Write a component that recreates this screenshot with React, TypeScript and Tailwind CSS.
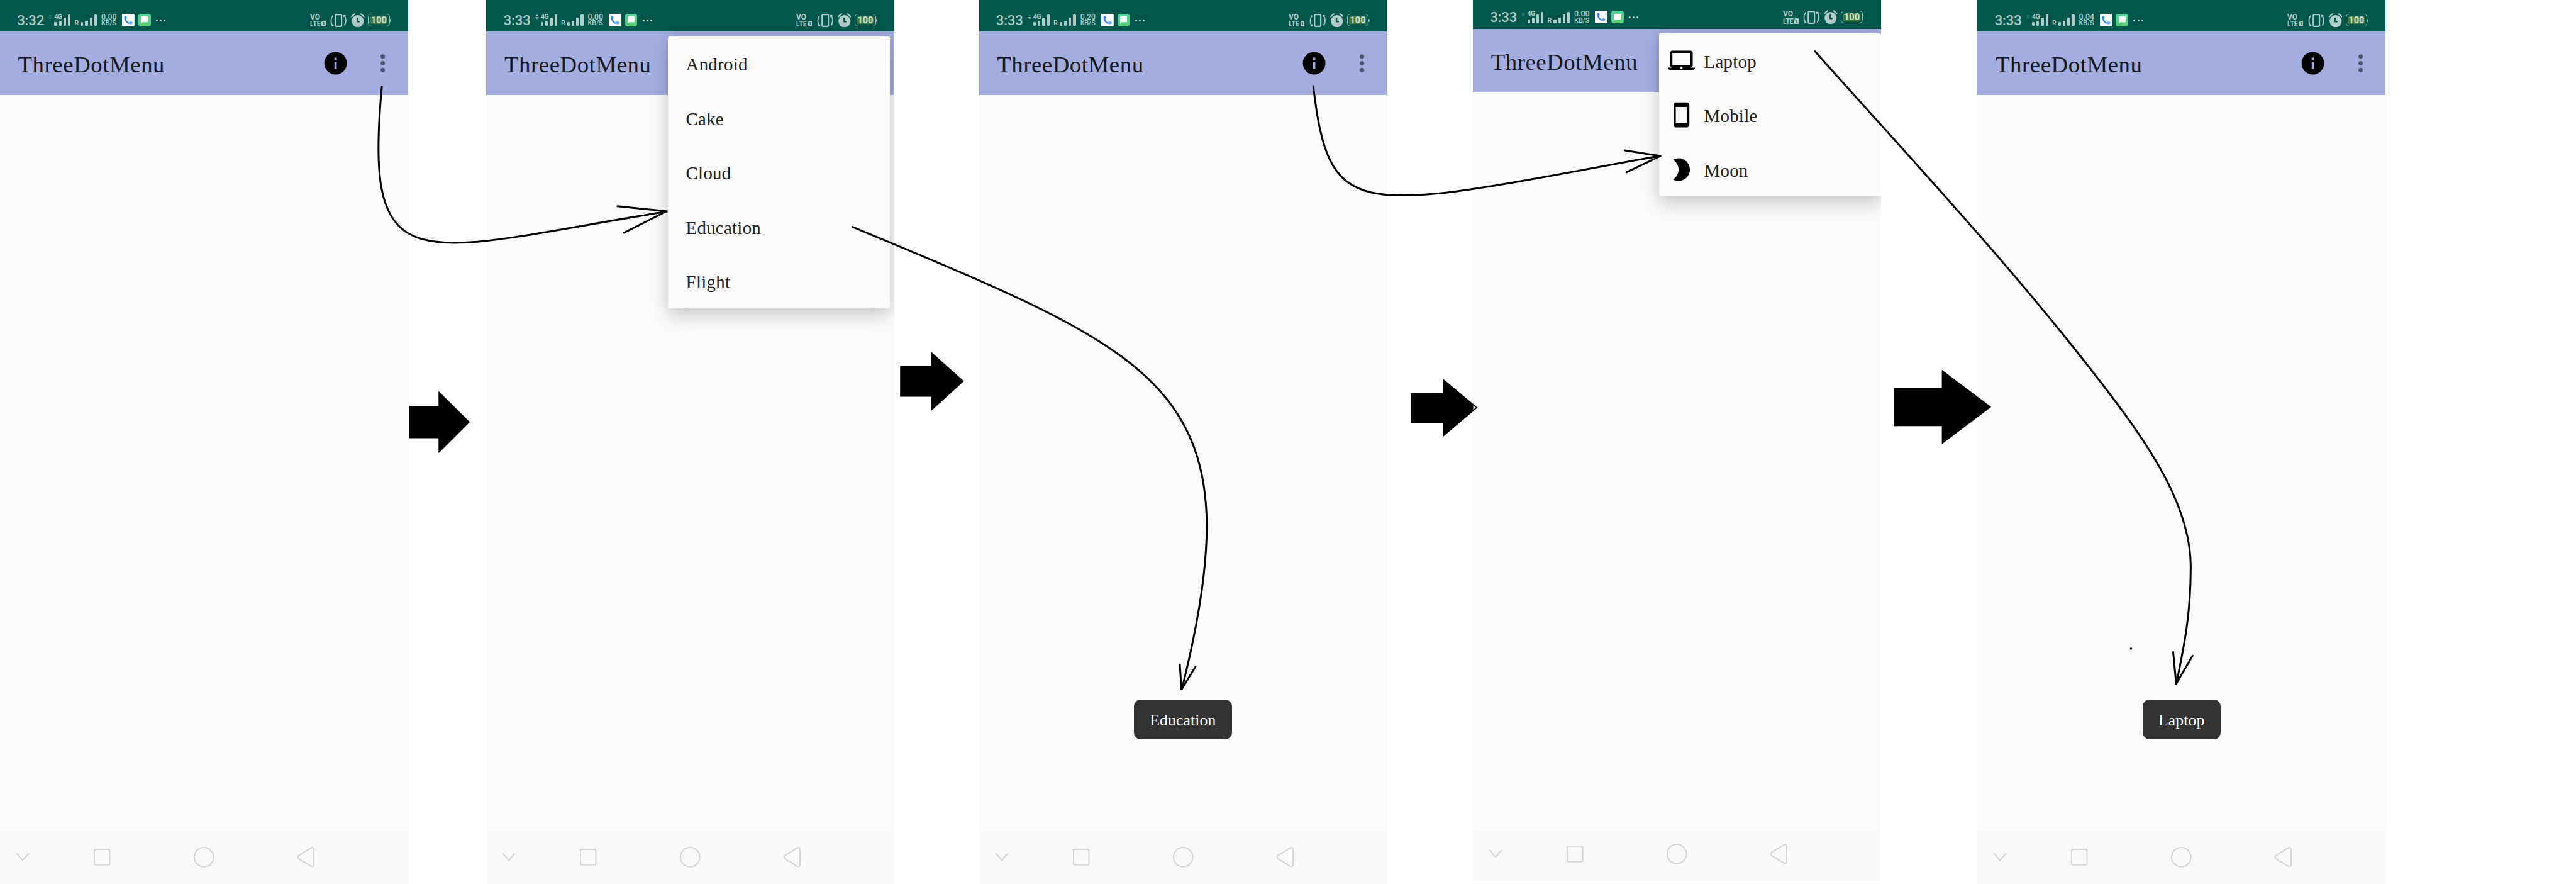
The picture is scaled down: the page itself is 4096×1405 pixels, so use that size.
import React from "react";
import { MdInfo, MdMoreVert, MdLaptopMac, MdStayPrimaryPortrait, MdModeNight } from "react-icons/md";

type Activity = { up: boolean; down: boolean };

function Bars() {
  return (
    <div className="flex h-[18px] w-[25.8px] items-end justify-between">
      <div className="h-[6px] w-[4.2px] rounded-[1.2px] bg-[#b2cdc9]" />
      <div className="h-[8.4px] w-[4.2px] rounded-[1.2px] bg-[#b2cdc9]" />
      <div className="h-[13.2px] w-[4.2px] rounded-[1.2px] bg-[#b2cdc9]" />
      <div className="h-[18px] w-[4.2px] rounded-[1.2px] bg-[#b2cdc9]" />
    </div>
  );
}

function CallBadge() {
  return (
    <svg viewBox="0 0 33 33" className="ml-[9px] h-[19.8px] w-[19.8px]">
      <rect width="33" height="33" rx="1.8" fill="#fff" />
      <path
        d="M5.8 10.5C5.6 7.6 7 5.5 9.4 5.3C12 6 13.2 9.6 12 12.2L10.6 13.6C11.6 17.6 14.6 21.4 18.8 22.8L20.4 21.4C22.6 19.2 26.4 20.4 27.6 22.8C28.4 25.4 26 27 23.2 27.2C14 27.6 6.2 20 5.8 10.5Z"
        fill="#2a86fb"
      />
      <path d="M18.8 22.8L20.4 21.4C22.6 19.2 26.4 20.4 27.6 22.8C28.4 25.4 26 27 23.2 27.2C20.5 27.3 18 26.7 15.8 25.6Z" fill="#66aaff" />
    </svg>
  );
}

function MessageBadge() {
  return (
    <div className="ml-[6px] flex h-[19.8px] w-[19.8px] items-center justify-center rounded-[4px] bg-linear-to-b from-[#51d49a] to-[#56cd72]">
      <svg viewBox="0 0 19 19" className="h-[11.4px] w-[11.4px]">
        <path d="M2.5 0H16.5Q19 0 19 2.5V13Q19 15.5 16.5 15.5H4.5L0 19V2.5Q0 0 2.5 0Z" fill="#fff" />
      </svg>
    </div>
  );
}

function StatusBar({ time, speed, activity }: { time: string; speed: string; activity: Activity }) {
  return (
    <div className="flex h-[50.45px] items-start bg-[#00574b] pt-[22.2px] pl-[27.2px] font-[Roboto,sans-serif] text-[#b2cdc9]">
      <div className="mt-[1px] h-[20px] w-[50.1px] text-[22px] leading-[20px] font-medium tracking-[-0.1px] whitespace-nowrap">{time}</div>
      <svg viewBox="0 0 10 12" className="mt-[1.2px] h-[7.2px] w-[6px]">
        <path d="M0 5L5 0L10 5Z" fill="#b2cdc9" opacity={activity.up ? 1 : 0.3} />
        <path d="M0 7L5 12L10 7Z" fill="#b2cdc9" opacity={activity.down ? 1 : 0.3} />
      </svg>
      <div className="relative ml-[3.2px] pt-[1.2px]">
        <div className="absolute top-0 left-0 text-[10.4px] leading-[9.6px] font-bold tracking-[-0.5px]">4G</div>
        <Bars />
      </div>
      <div className="ml-[6.2px] w-[9.8px] pt-[10.3px] text-[10.6px] leading-[10px] font-semibold">R</div>
      <div className="pt-[1.2px]">
        <Bars />
      </div>
      <div className="ml-[7px] w-[24.2px] whitespace-nowrap">
        <div className="text-[12.3px] leading-[10.2px] font-medium">{speed}</div>
        <div className="text-[10.8px] leading-[10.4px] font-medium tracking-[-0.1px]">KB/S</div>
      </div>
      <CallBadge />
      <MessageBadge />
      <div className="ml-[8.2px] flex h-[20px] items-center gap-[3.2px]">
        <div className="size-[3px] rounded-full bg-[#b2cdc9]" />
        <div className="size-[3px] rounded-full bg-[#b2cdc9]" />
        <div className="size-[3px] rounded-full bg-[#b2cdc9]" />
      </div>

      <div className="mr-[27.2px] ml-auto flex items-start">
        <div className="w-[25.6px]">
          <div className="h-[10.2px] origin-left scale-x-[.94] text-[12.8px] leading-[10.2px] font-bold">VO</div>
          <div className="flex h-[11px] items-center">
            <div className="w-[18.2px] origin-left scale-x-[.82] text-[12.6px] leading-[11px] font-bold">LTE</div>
            <div className="flex h-[9px] w-[6.8px] items-center justify-center rounded-[1px] rounded-tl-[3px] bg-[#b2cdc9] text-[7.5px] leading-[9px] font-bold text-[#00574b]">1</div>
          </div>
        </div>
        <svg viewBox="0 0 44 36" className="ml-[6.8px] h-[21.6px] w-[26.4px]" fill="none" stroke="#b2cdc9">
          <rect x="13.8" y="1.8" width="16.4" height="31.4" rx="2.6" strokeWidth="3.6" />
          <path d="M7 4.5C1 12 1 24 6 31" strokeWidth="3" />
          <path d="M37.5 31C43 23 43 12 38 5" strokeWidth="3" />
          <path d="M2 32.5L9 33L8.5 26.5Z" fill="#b2cdc9" stroke="none" />
          <path d="M35 3L42 3.5L35.5 9.5Z" fill="#b2cdc9" stroke="none" />
        </svg>
        <svg viewBox="0 0 36 37" className="mt-[-1.6px] ml-[6.6px] h-[22.2px] w-[21.6px]" fill="none" stroke="#b2cdc9">
          <circle cx="18" cy="21" r="16" fill="#b2cdc9" stroke="none" />
          <path d="M1.8 9.2Q4.5 4.5 10.2 2" strokeWidth="3.4" strokeLinecap="round" />
          <path d="M34.2 9.2Q31.5 4.5 25.8 2" strokeWidth="3.4" strokeLinecap="round" />
          <path d="M17 13.5V22H21.5" stroke="#00574b" strokeWidth="4" strokeLinecap="round" strokeLinejoin="round" />
        </svg>
        <div className="ml-[5.4px] flex items-center">
          <div className="flex h-[20px] w-[34.4px] items-center justify-center rounded-[5px] border-[1.8px] border-[#9cbdb6] p-[2px]">
            <div className="flex h-[12.4px] w-[27px] items-center justify-center rounded-[2.6px] bg-[#41793a] text-[14.6px] leading-[12.4px] font-bold text-[#cfe0d2]">100</div>
          </div>
          <div className="h-[5px] w-[1.8px] rounded-r-full bg-[#9cbdb6]" />
        </div>
      </div>
    </div>
  );
}

function NavBar() {
  return (
    <div className="flex h-[86px] items-center border-t border-[#f9f9f9] bg-[#f9f9f9]">
      <svg viewBox="0 0 1080 144" className="h-[86.5px] w-[648.6px]" fill="none" stroke="#d0d0d0" strokeWidth="3">
        <path d="M45 63L60 80L75.5 63" strokeLinecap="round" />
        <rect x="249.5" y="51.5" width="41" height="41" rx="4" />
        <circle cx="540" cy="72" r="25.6" />
        <path d="M791 67.5L824 47.5Q831 45 831 53V91Q831 99 824 96.5L791 76.5Q786 72 791 67.5Z" />
      </svg>
    </div>
  );
}

function Phone({
  time = "3:33",
  speed = "0.00",
  activity,
  lifted = false,
  actions = true,
  menu,
  toast,
}: {
  time?: string;
  speed?: string;
  activity: Activity;
  lifted?: boolean;
  actions?: boolean;
  menu?: React.ReactNode;
  toast?: string;
}) {
  return (
    <section className={`relative flex h-[1405px] w-[648.6px] shrink-0 flex-col overflow-hidden bg-[#fafafa] ${lifted ? "mt-[-4.8px]" : ""}`}>
      <StatusBar time={time} speed={speed} activity={activity} />
      <header className="flex h-[100.9px] items-center bg-[#a3ade0] pl-[28.6px]">
        <h1 className="mt-[4.4px] font-['Liberation_Serif',serif] text-[36.8px] tracking-[0.55px] text-[#15181d]">ThreeDotMenu</h1>
        {actions && (
          <div className="mr-[18px] ml-auto flex gap-[32.4px]">
            <MdInfo className="size-[43.2px] text-black" />
            <MdMoreVert className="size-[43.2px] text-[#4b526c]" />
          </div>
        )}
      </header>
      <main className="flex flex-1 flex-col items-center justify-end">
        {toast && (
          <div className="mb-[144px] flex h-[63px] items-center rounded-[11px] bg-[#333333] px-[25.4px] font-['Liberation_Serif',serif] text-[25.6px] tracking-[0.15px] text-white">
            <span className="mt-[3.4px]">{toast}</span>
          </div>
        )}
      </main>
      <NavBar />
      {menu}
    </section>
  );
}

function MenuRow({ label, icon }: { label: string; icon?: React.ReactNode }) {
  return (
    <li className="flex h-[86.5px] items-center">
      {icon}
      <span className="mt-[4px]">{label}</span>
    </li>
  );
}

const menuShadow = "shadow-[0_14px_30px_rgba(0,0,0,0.15),0_0_18px_rgba(0,0,0,0.09)]";

export default function App() {
  return (
    <div className="relative flex h-[1405px] w-[4096px] overflow-hidden bg-white">
      <Phone time="3:32" activity={{ up: false, down: false }} />
      <div className="w-[124.9px] shrink-0" />
      <Phone
        activity={{ up: true, down: true }}
        actions={false}
        menu={
          <ul className={`absolute top-[57.7px] left-[288.3px] w-[353.1px] rounded-[3px] bg-[#fafafa] pl-[28.8px] font-['Liberation_Serif',serif] text-[28.8px] tracking-[0.3px] text-[#202020] ${menuShadow}`}>
            <MenuRow label="Android" />
            <MenuRow label="Cake" />
            <MenuRow label="Cloud" />
            <MenuRow label="Education" />
            <MenuRow label="Flight" />
          </ul>
        }
      />
      <div className="w-[134.5px] shrink-0" />
      <Phone speed="0.20" activity={{ up: false, down: true }} toast="Education" />
      <div className="w-[136.9px] shrink-0" />
      <Phone
        lifted
        activity={{ up: false, down: false }}
        actions={false}
        menu={
          <ul className={`absolute top-[57.7px] left-[295.5px] w-[353.1px] rounded-[3px] bg-[#fafafa] pl-[14.4px] font-['Liberation_Serif',serif] text-[28.8px] tracking-[0.3px] text-[#202020] ${menuShadow}`}>
            <MenuRow label="Laptop" icon={<MdLaptopMac className="mr-[14.4px] size-[43.2px] text-black" />} />
            <MenuRow label="Mobile" icon={<MdStayPrimaryPortrait className="mr-[14.4px] size-[43.2px] text-black" />} />
            <MenuRow label="Moon" icon={<MdModeNight className="mr-[14.4px] size-[43.2px] text-black" />} />
          </ul>
        }
      />
      <div className="w-[153.8px] shrink-0" />
      <Phone speed="0.04" activity={{ up: false, down: false }} toast="Laptop" />

      {/* Annotation layer: block arrows between screens and pen strokes over them */}
      <svg viewBox="0 0 6820 2340" preserveAspectRatio="none" className="pointer-events-none absolute inset-0 h-[1405px] w-[4096px]">
        <path d="M1083 1075H1161V1035L1244 1117L1161 1200V1160H1083Z" />
        <path d="M2383 969H2465V931L2552 1009L2465 1088V1050H2383Z" />
        <path d="M3735 1040H3821V1003L3912 1079L3821 1156V1119H3735Z" />
        <path d="M3900.5 1073L3907 1079L3900.5 1085Z" fill="#fff" />
        <path d="M5015 1027H5141V979L5272 1077L5141 1176V1128H5015Z" />
        <g fill="none" stroke="#000" strokeWidth="5" strokeLinecap="round" strokeLinejoin="round">
          <path d="M1011 229C960 765 1110 664 1765 560" />
          <path d="M1635 546L1765 559L1652 616" />
          <path d="M2257 600.5C3080 945 3330 1025 3129 1824" />
          <path d="M3123.5 1759L3128 1825L3165 1765" />
          <path d="M3477 228C3520 600 3600 557 4394 412.5" />
          <path d="M4302 398L4396 413L4306 456" />
          <path d="M4805.5 136C5060 422 5325 703 5569 1021C5684 1171 5800 1335 5800 1500C5800 1620 5785 1700 5762 1809" />
          <path d="M5753.5 1726L5761.5 1810L5805 1736" />
        </g>
        <circle cx="5642" cy="1717" r="3" />
      </svg>
    </div>
  );
}
